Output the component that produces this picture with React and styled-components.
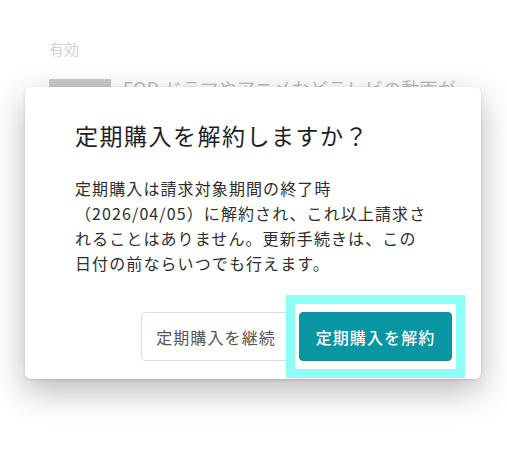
import React from "react";
import styled, { createGlobalStyle } from "styled-components";

const Global = createGlobalStyle`
  html, body { margin: 0; padding: 0; background: #ffffff; }
  body { font-family: "Noto Sans CJK JP", "Noto Sans", sans-serif; }
  * { box-sizing: border-box; }
`;

const Page = styled.div`
  position: relative;
  width: 507px;
  height: 464px;
  overflow: hidden;
  background: #ffffff;
`;

const Backdrop = styled.div`
  padding: 38px 0 0 49px;
  display: flex;
  flex-direction: column;
  gap: 16px;
`;

const Status = styled.div`
  font-size: 15px;
  line-height: 22px;
  color: #d2d2d2;
`;

const ItemRow = styled.div`
  display: flex;
  gap: 12px;
  align-items: flex-start;
`;

const Thumb = styled.div`
  width: 62px;
  height: 60px;
  background: #cbcbcb;
  margin-top: 3px;
`;

const ItemTitle = styled.div`
  font-size: 18px;
  line-height: 24px;
  color: #bdbdbd;
  letter-spacing: 0.3px;
  white-space: nowrap;
`;

const Dialog = styled.div`
  position: absolute;
  top: 87px;
  left: 25px;
  width: 456px;
  height: 292px;
  background: #ffffff;
  border-radius: 6px;
  box-shadow: 0 12px 34px rgba(0, 0, 0, 0.28), 0 1px 3px rgba(0, 0, 0, 0.12);
  padding: 31px 29px 18px 50px;
  display: flex;
  flex-direction: column;
`;

const Title = styled.h2`
  margin: 0;
  font-size: 23px;
  line-height: 34px;
  font-weight: 400;
  letter-spacing: 1.5px;
  color: #1e1e1e;
  white-space: nowrap;
`;

const Body = styled.p`
  margin: 24px 0 0;
  font-size: 16px;
  line-height: 25px;
  letter-spacing: 1.1px;
  color: #2e2e2e;
  white-space: nowrap;
`;

const Actions = styled.div`
  margin-top: auto;
  display: flex;
  justify-content: flex-end;
  align-items: center;
  gap: 8px;
`;

const Button = styled.button`
  height: 49px;
  padding: 0;
  border-radius: 4px;
  font-family: inherit;
  font-size: 16px;
  letter-spacing: 1.1px;
  white-space: nowrap;
  text-align: center;
  cursor: pointer;
  border: 1px solid ${(p) => (p.$primary ? "#0b8f9b" : "#dedede")};
  background: ${(p) => (p.$primary ? "#0896a2" : "#ffffff")};
  color: ${(p) => (p.$primary ? "#ffffff" : "#555555")};
  font-weight: ${(p) => (p.$primary ? 500 : 400)};
  width: ${(p) => p.$w}px;
`;

const Highlight = styled.span`
  position: relative;
  display: inline-flex;
  &::after {
    content: "";
    position: absolute;
    top: -17px;
    bottom: -17px;
    left: -13px;
    right: -13px;
    border: 9px solid #8dfff7;
    pointer-events: none;
  }
`;

export default function App() {
  return (
    <Page>
      <Global />
      <Backdrop>
        <Status>有効</Status>
        <ItemRow>
          <Thumb />
          <ItemTitle>FOD ドラマやアニメなどテレビの動画が</ItemTitle>
        </ItemRow>
      </Backdrop>
      <Dialog>
        <Title>定期購入を解約しますか？</Title>
        <Body>
          定期購入は請求対象期間の終了時
          <br />
          （2026/04/05）に解約され、これ以上請求さ
          <br />
          れることはありません。更新手続きは、この
          <br />
          日付の前ならいつでも行えます。
        </Body>
        <Actions>
          <Button $w={150}>定期購入を継続</Button>
          <Highlight>
            <Button $primary $w={153}>定期購入を解約</Button>
          </Highlight>
        </Actions>
      </Dialog>
    </Page>
  );
}
